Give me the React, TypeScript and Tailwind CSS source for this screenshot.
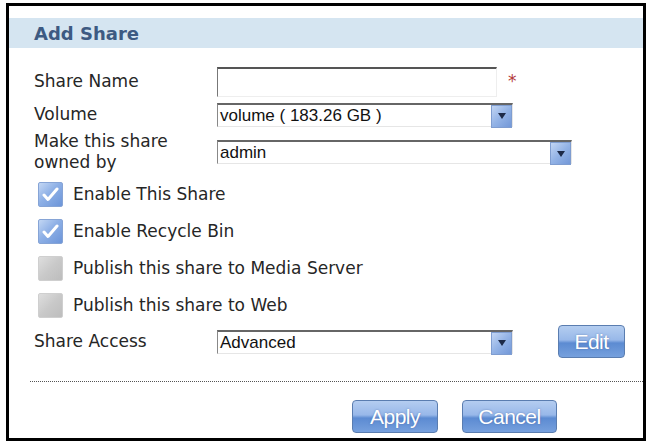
import type { ReactNode } from 'react';

function Arrow() {
  return (
    <span className="absolute right-0 top-0 flex h-[23px] w-[21px] items-center justify-center border border-[#7f9dd0] bg-[linear-gradient(135deg,#c2d5f3_0%,#93b3e6_50%,#7398d8_100%)]">
      <svg width="8" height="6" viewBox="0 0 8 6">
        <path d="M0 0h8L4 6z" fill="#1d2a48" />
      </svg>
    </span>
  );
}

function Select({ value, width }: { value: string; width: string }) {
  return (
    <div
      className={`relative h-[24px] ${width} border-t-2 border-l border-r border-b border-t-[#666] border-l-[#888] border-r-[#e6e6e6] border-b-[#e6e6e6] bg-white pl-[2px] font-['Liberation_Sans',Arial,sans-serif] text-[17px] leading-[22px] text-[#111]`}
    >
      {value}
      <Arrow />
    </div>
  );
}

function Check({ checked, children }: { checked: boolean; children: ReactNode }) {
  return (
    <div className="flex h-[37px] items-center pl-[29px]">
      {checked ? (
        <span className="flex h-[25px] w-[25px] items-center justify-center rounded-[2px] border border-[#86a4d6] bg-[linear-gradient(135deg,#c3d7f4_0%,#8eb0e6_45%,#6c95d9_100%)]">
          <svg width="17" height="15" viewBox="0 0 17 15">
            <path d="M2 8l4 4.5L15 2" fill="none" stroke="#fff" strokeWidth="3" strokeLinecap="round" strokeLinejoin="round" />
          </svg>
        </span>
      ) : (
        <span className="h-[25px] w-[25px] rounded-[2px] border border-[#cfcfcf] bg-[linear-gradient(135deg,#dedede_0%,#c9c9c9_50%,#bdbdbd_100%)]" />
      )}
      <span className="ml-[10px]">{children}</span>
    </div>
  );
}

function Btn({ label, width }: { label: string; width: string }) {
  return (
    <button
      className={`h-[33px] ${width} rounded-[4px] border border-[#5a7db0] bg-[linear-gradient(to_bottom,#b4cdf0_0%,#98b8e9_45%,#5c8bd2_55%,#76a0dd_100%)] font-['Liberation_Sans',Arial,sans-serif] text-[21px] leading-[31px] tracking-[-0.5px] text-white [text-shadow:0_0_2px_rgba(60,90,150,0.6)]`}
    >
      {label}
    </button>
  );
}

export default function App() {
  return (
    <div className="h-[446px] w-[648px] bg-white pl-[6px] pt-[3px]">
      <div className="flex h-[438px] w-[640px] flex-col border-[3px] border-black font-['DejaVu_Sans',Verdana,sans-serif] text-[17px] text-[#262626]">
        <div className="mt-[12px] flex h-[30px] items-center bg-[#d5e5f1] pl-[25px] text-[18px] font-bold text-[#3d5a82]">
          Add Share
        </div>

        <div className="mt-[19px] flex h-[30px] items-center pl-[25px]">
          <span className="w-[183px]">Share Name</span>
          <div className="h-[30px] w-[280px] border-t-2 border-l border-r border-b border-t-[#555] border-l-[#777] border-r-[#eee] border-b-[#eee] bg-white" />
          <span className="ml-[11px] text-[#b33a3a]">*</span>
        </div>

        <div className="mt-[5px] flex h-[25px] items-center pl-[25px]">
          <span className="w-[183px]">Volume</span>
          <Select value="volume ( 183.26 GB )" width="w-[296px]" />
        </div>

        <div className="mt-[4px] flex items-center pl-[25px]">
          <span className="w-[183px] leading-[21px]">
            Make this share
            <br />
            owned by
          </span>
          <Select value="admin" width="w-[355px]" />
        </div>

        <div className="mt-[3px] flex flex-col">
          <Check checked>Enable This Share</Check>
          <Check checked>Enable Recycle Bin</Check>
          <Check checked={false}>Publish this share to Media Server</Check>
          <Check checked={false}>Publish this share to Web</Check>
        </div>

        <div className="mt-[1px] flex h-[33px] items-center pl-[25px]">
          <span className="w-[183px]">Share Access</span>
          <Select value="Advanced" width="w-[296px]" />
          <div className="ml-[45px]">
            <Btn label="Edit" width="w-[67px]" />
          </div>
        </div>

        <div className="ml-[21px] mt-[23px] border-t border-dotted border-[#555]" />

        <div className="mt-[18px] flex gap-[24px] pl-[343px]">
          <Btn label="Apply" width="w-[86px]" />
          <Btn label="Cancel" width="w-[95px]" />
        </div>
      </div>
    </div>
  );
}
